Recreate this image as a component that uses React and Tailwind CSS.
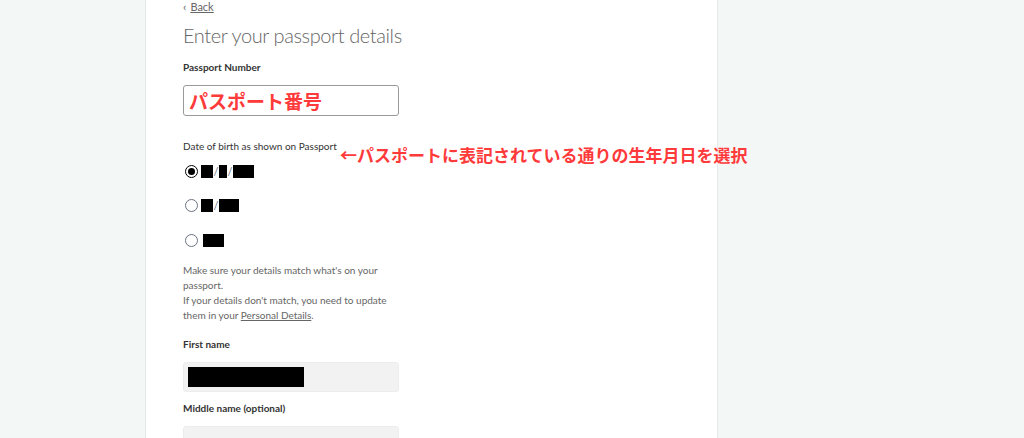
import { useState } from "react";

const Block = ({ w }) => <span className={`inline-block h-[13px] bg-black ${w}`}></span>;

const Slash = () => <span className="text-[11px] leading-none text-gray-500 mx-[0.5px]">/</span>;

const Radio = ({ checked, onClick, children }) => (
  <button type="button" onClick={onClick} className="flex items-center h-[13px]">
    <span
      className={`w-[13px] h-[13px] rounded-full border flex items-center justify-center shrink-0 ${
        checked ? "border-black" : "border-gray-500"
      }`}
    >
      {checked && <span className="w-[7px] h-[7px] rounded-full bg-black"></span>}
    </span>
    <span className="flex items-center ml-[3px]">{children}</span>
  </button>
);

const App = () => {
  const [dob, setDob] = useState(0);

  return (
    <div className="h-screen overflow-hidden bg-[#f3f7f6] font-['Lato','Noto_Sans_CJK_JP',sans-serif]">
      <div className="ml-[145px] w-[573px] h-full bg-white border-l border-r border-[#e6eaea] pl-[37px] relative">
        <a href="#" className="flex items-center gap-[4px] text-[11px] text-[#666] leading-[13px]">
          <span className="text-[12px]">‹</span>
          <span className="underline">Back</span>
        </a>
        <h1 className="mt-[8px] text-[20px] font-light text-[#666] leading-[28px] tracking-[-0.4px]">
          Enter your passport details
        </h1>

        <p className="mt-[12px] text-[10px] font-bold text-[#333] leading-[12px]">Passport Number</p>
        <div className="mt-[12px] w-[216px] h-[31px] border border-[#999] rounded-[3px] flex items-center px-[5px]">
          <span className="text-[19px] font-bold text-[#ff3a3a] font-['Noto_Sans_CJK_JP',sans-serif] leading-none">
            パスポート番号
          </span>
        </div>

        <p className="mt-[24px] text-[10px] text-[#333] leading-[12px] whitespace-nowrap">Date of birth as shown on Passport</p>
        <span className="absolute left-[194px] top-[145px] whitespace-nowrap text-[17px] font-bold text-[#ff3a3a] font-['Noto_Sans_CJK_JP',sans-serif] leading-[20px]">
          ←パスポートに表記されている通りの生年月日を選択
        </span>

        <div className="mt-[13px] flex flex-col gap-[21px] pl-[2px]">
          <Radio checked={dob === 0} onClick={() => setDob(0)}>
            <Block w="w-[12px]" />
            <Slash />
            <Block w="w-[8px]" />
            <Slash />
            <Block w="w-[21px]" />
          </Radio>
          <Radio checked={dob === 1} onClick={() => setDob(1)}>
            <Block w="w-[12px]" />
            <Slash />
            <Block w="w-[20px]" />
          </Radio>
          <div className="mt-[1px]">
            <Radio checked={dob === 2} onClick={() => setDob(2)}>
              <span className="ml-[2px]"></span>
              <Block w="w-[21px]" />
            </Radio>
          </div>
        </div>

        <div className="mt-[16px] text-[10px] text-[#666] leading-[15px] whitespace-nowrap">
          <p>
            Make sure your details match what's on your
            <br />
            passport.
          </p>
          <p>
            If your details don't match, you need to update
            <br />
            them in your <a href="#" className="underline">Personal Details</a>.
          </p>
        </div>

        <p className="mt-[15px] text-[10px] font-bold text-[#333] leading-[12px]">First name</p>
        <div className="mt-[12px] w-[216px] h-[30px] bg-[#f2f2f2] border border-[#ececec] rounded-[3px] flex items-center px-[4px]">
          <span className="block w-[116px] h-[20px] bg-black"></span>
        </div>

        <p className="mt-[10px] text-[10px] font-bold text-[#333] leading-[12px]">Middle name (optional)</p>
        <div className="mt-[12px] w-[216px] h-[30px] bg-[#f2f2f2] border border-[#ececec] rounded-[3px]"></div>
      </div>
    </div>
  );
};

export default App;
